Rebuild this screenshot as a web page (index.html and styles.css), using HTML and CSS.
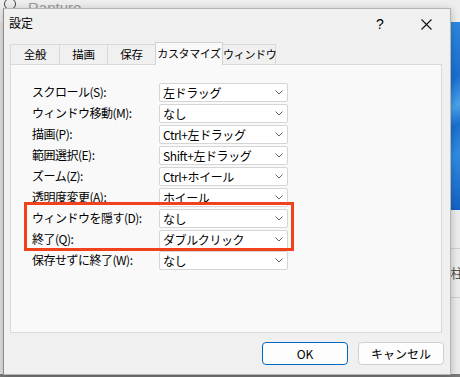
FILE: index.html
```html
<!DOCTYPE html>
<html lang="ja">
<head>
  <meta charset="UTF-8">
  <title>設定</title>
  <link rel="stylesheet" href="styles.css">
</head>
<body>

<div class="desktop">
  <!-- window behind the dialog -->
  <div class="back-window">
    <div class="back-title">
      <span class="back-icon"></span>
      <span class="back-name">Rapture -</span>
    </div>
    <div class="back-side">
      <div class="wallpaper"></div>
      <div class="back-line"></div>
      <div class="back-text">)柱</div>
      <div class="back-line"></div>
      <div class="back-rest"></div>
    </div>
  </div>

  <div class="dialog">
    <div class="titlebar">
      <span class="title">設定</span>
      <span class="help">?</span>
      <span class="close">
        <svg width="11" height="11" viewBox="0 0 11 11"><path d="M0.5 0.5 L10.5 10.5 M10.5 0.5 L0.5 10.5" stroke="#111" stroke-width="1.1" fill="none"/></svg>
      </span>
    </div>

    <div class="tabs">
      <div class="tab w49">全般</div>
      <div class="tab w48">描画</div>
      <div class="tab w48">保存</div>
      <div class="tab active">カスタマイズ</div>
      <div class="tab w53">ウィンドウ</div>
    </div>

    <div class="panel">
      <div class="form" id="form"></div>
      <div class="highlight"></div>
    </div>

    <div class="buttons">
      <button class="btn default">OK</button>
      <button class="btn">キャンセル</button>
    </div>
  </div>
</div>

<script>
  const rows = [
    ['スクロール(S):', '左ドラッグ'],
    ['ウィンドウ移動(M):', 'なし'],
    ['描画(P):', 'Ctrl+左ドラッグ'],
    ['範囲選択(E):', 'Shift+左ドラッグ'],
    ['ズーム(Z):', 'Ctrl+ホイール'],
    ['透明度変更(A):', 'ホイール'],
    ['ウィンドウを隠す(D):', 'なし'],
    ['終了(Q):', 'ダブルクリック'],
    ['保存せずに終了(W):', 'なし']
  ];

  const form = document.getElementById('form');
  rows.forEach(row => {
    const label = document.createElement('div');
    label.className = 'label';
    label.textContent = row[0];
    const select = document.createElement('div');
    select.className = 'select';
    select.innerHTML = `
      <span>${row[1]}</span>
      <svg width="8" height="5" viewBox="0 0 8 5"><path d="M0.5 0.5 L4 4 L7.5 0.5" stroke="#666" stroke-width="1" fill="none"/></svg>
    `;
    form.appendChild(label);
    form.appendChild(select);
  });
</script>

</body>
</html>
```

FILE: styles.css
```css
body {
  margin: 0;
  font-family: "Noto Sans CJK JP", "Noto Sans", sans-serif;
  font-size: 12px;
  color: #000;
}
.desktop {
  position: relative;
  width: 460px;
  height: 377px;
  overflow: hidden;
  background: #dcdcdc;
}
.back-window {
  position: absolute;
  left: 0;
  top: 0;
  width: 460px;
  height: 374px;
  background: #e4e4e4;
  border-bottom: 3px solid #7a7a7a;
}
.back-title {
  height: 22px;
  display: flex;
  align-items: flex-start;
  gap: 6px;
  padding-left: 4px;
  background: #eeeeee;
  color: #9a9a9a;
  font-family: "Liberation Sans", sans-serif;
  font-size: 15px;
  line-height: 15px;
}
.back-name {
  margin-top: 0;
  margin-left: 6px;
}
.back-icon {
  width: 10px;
  height: 10px;
  border: 1px solid #444;
  border-radius: 50%;
  margin-top: -2px;
}
.back-side {
  margin-left: 450px;
  display: flex;
  flex-direction: column;
  background: #ececec;
  color: #555;
  height: 352px;
}
.wallpaper {
  height: 188px;
  flex: none;
  background: linear-gradient(150deg, #2d8ae0 0%, #1a6fd0 30%, #4aa3ec 45%, #1b70cf 55%, #2f8de2 70%, #1560c4 100%);
}
.back-rest {
  flex: 1;
}
.back-line {
  height: 1px;
  flex: none;
  background: #cfcfcf;
}
.back-line:nth-child(2) {
  margin-top: 38px;
}
.back-text {
  height: 48px;
  flex: none;
  line-height: 48px;
  margin-left: -4px;
  font-size: 13px;
  white-space: nowrap;
}
.dialog {
  position: absolute;
  left: 3px;
  top: 8px;
  width: 446px;
  height: 365px;
  display: flex;
  flex-direction: column;
  background: #f0f0f0;
  border: 1px solid #b5b5b5;
  border-left-color: #8c8c8c;
  box-shadow: 0 2px 8px rgba(0,0,0,0.25);
}
.titlebar {
  height: 34px;
  display: flex;
  align-items: center;
  padding: 0 0 0 5px;
}
.title {
  flex: 1;
  font-size: 12px;
  margin-top: -7px;
}
.help {
  width: 46px;
  text-align: center;
  font-family: "Liberation Sans", sans-serif;
  font-size: 14px;
  margin-top: -4px;
}
.close {
  width: 46px;
  display: flex;
  justify-content: center;
  margin-right: 1px;
  margin-top: -4px;
}
.tabs {
  display: flex;
  align-items: flex-end;
  height: 21px;
  padding-left: 6px;
}
.tab {
  box-sizing: border-box;
  height: 20px;
  line-height: 19px;
  padding: 0;
  border: 1px solid #d9d9d9;
  border-bottom: none;
  margin-right: -1px;
  background: #f0f0f0;
  text-align: center;
  font-size: 11.5px;
  letter-spacing: -0.3px;
  white-space: nowrap;
}
.w48 { width: 49px; }
.w49 { width: 50px; }
.w53 { width: 54px; }
.tab.active {
  width: 68px;
  height: 23px;
  line-height: 21px;
  font-size: 11px;
  letter-spacing: -0.4px;
  background: #f9f9f9;
  border-color: #d0d0d0;
  position: relative;
  z-index: 1;
  margin-bottom: -1px;
}
.tab.w53 {
  font-size: 11px;
  letter-spacing: -0.3px;
}
.panel {
  position: relative;
  margin: 0 8px 0 6px;
  height: 267px;
  background: #f9f9f9;
  border: 1px solid #dadada;
}
.form {
  display: grid;
  grid-template-columns: 127px 129px;
  grid-auto-rows: 19px;
  row-gap: 2px;
  padding: 18px 0 0 21px;
}
.label {
  line-height: 18px;
  letter-spacing: -0.5px;
  white-space: nowrap;
}
.select {
  display: flex;
  align-items: center;
  justify-content: space-between;
  padding: 0 4px 0 3px;
  background: #fff;
  border: 1px solid #d5d5d5;
  border-radius: 2px;
  letter-spacing: -0.4px;
}
.highlight {
  position: absolute;
  left: 13px;
  top: 137px;
  width: 264px;
  height: 43px;
  border: 3px solid #f2421c;
}
.buttons {
  display: flex;
  justify-content: flex-end;
  gap: 10px;
  padding: 9px 6px 0 0;
}
.btn {
  width: 86px;
  height: 23px;
  font-family: "Noto Sans CJK JP", "Noto Sans", sans-serif;
  font-size: 12px;
  background: #fdfdfd;
  border: 1px solid #d0d0d0;
  border-radius: 4px;
  color: #000;
}
.btn.default {
  border-color: #0067c0;
}
```
